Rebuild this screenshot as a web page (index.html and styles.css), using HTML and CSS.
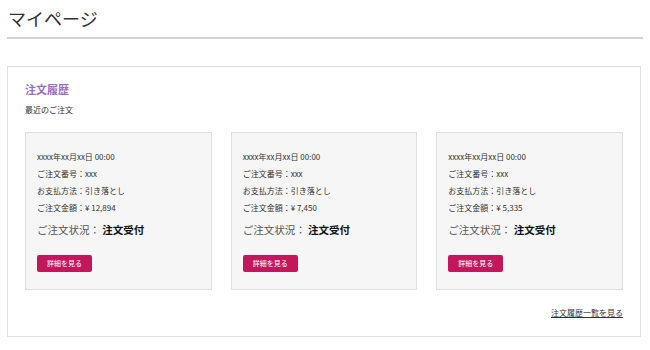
FILE: index.html
```html
<!DOCTYPE html>
<html lang="ja">
<head>
    <meta charset="utf-8">
    <title>マイページ</title>
    <link rel="stylesheet" href="styles.css">
</head>
<body>
    <h1 class="page-title">マイページ</h1>

    <section class="history">
        <h2 class="history-title">注文履歴</h2>
        <p class="history-lead">最近のご注文</p>

        <div class="order-list">
            <div class="order-card">
                <div class="order-line">xxxx年xx月xx日 00:00</div>
                <div class="order-line">ご注文番号：xxx</div>
                <div class="order-line">お支払方法：引き落とし</div>
                <div class="order-line">ご注文金額：¥ 12,894</div>
                <div class="order-status">ご注文状況： <strong>注文受付</strong></div>
                <a class="detail-btn" href="#">詳細を見る</a>
            </div>
            <div class="order-card">
                <div class="order-line">xxxx年xx月xx日 00:00</div>
                <div class="order-line">ご注文番号：xxx</div>
                <div class="order-line">お支払方法：引き落とし</div>
                <div class="order-line">ご注文金額：¥ 7,450</div>
                <div class="order-status">ご注文状況： <strong>注文受付</strong></div>
                <a class="detail-btn" href="#">詳細を見る</a>
            </div>
            <div class="order-card">
                <div class="order-line">xxxx年xx月xx日 00:00</div>
                <div class="order-line">ご注文番号：xxx</div>
                <div class="order-line">お支払方法：引き落とし</div>
                <div class="order-line">ご注文金額：¥ 5,335</div>
                <div class="order-status">ご注文状況： <strong>注文受付</strong></div>
                <a class="detail-btn" href="#">詳細を見る</a>
            </div>
        </div>

        <div class="history-more">
            <a href="#">注文履歴一覧を見る</a>
        </div>
    </section>
</body>
</html>
```

FILE: styles.css
```css
body {
    margin: 7px;
    background: #fff;
    color: #333;
    font-family: "Noto Sans CJK JP", "Noto Sans", sans-serif;
}
.page-title {
    margin: 0;
    padding: 0 1px 8px;
    font-size: 18px;
    font-weight: normal;
    line-height: 22px;
    border-bottom: 2px solid #d2d2d2;
}
.history {
    margin-top: 27px;
    margin-right: 2px;
    padding: 14px 17px 17px 17px;
    border: 1px solid #e0e0e0;
}
.history-title {
    margin: 0;
    font-size: 11px;
    line-height: 16px;
    color: #9a6fc0;
}
.history-lead {
    margin: 7px 0 0;
    font-size: 8px;
    line-height: 12px;
}
.order-list {
    display: grid;
    grid-template-columns: repeat(3, 1fr);
    gap: 19px;
    margin-top: 16px;
}
.order-card {
    background: #f6f6f6;
    border: 1px solid #dedede;
    padding: 15px 11px 17px;
}
.order-line {
    font-size: 8px;
    line-height: 17px;
}
.order-status {
    margin-top: 6px;
    font-size: 10.5px;
    line-height: 16px;
    color: #555;
}
.order-status strong {
    color: #111;
}
.detail-btn {
    display: inline-block;
    margin-top: 17px;
    padding: 0 10px;
    height: 17px;
    line-height: 17px;
    font-size: 7px;
    color: #fff;
    background: #c2185b;
    border-radius: 2px;
    text-decoration: none;
}
.history-more {
    margin-top: 17px;
    text-align: right;
    font-size: 8px;
    line-height: 12px;
}
.history-more a {
    color: #333;
}
```
